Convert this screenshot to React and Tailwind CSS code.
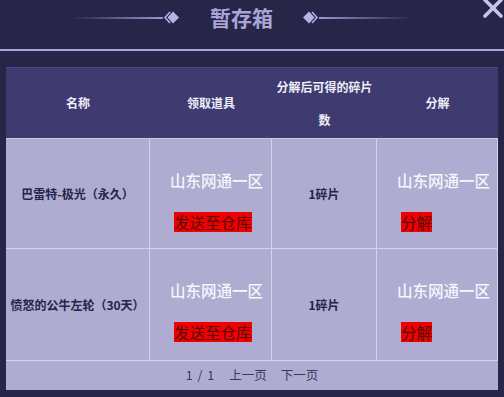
import React from "react";

const font = { fontFamily: '"Noto Sans CJK SC", "Noto Sans", sans-serif' };

function Diamond({ flip }) {
  return (
    <svg width="16" height="17" viewBox="0 0 16 17" className={flip ? "-scale-x-100" : ""}>
      <polyline points="7,3 2,8.5 7,14" fill="none" stroke="#b3afe4" strokeWidth="1.6" />
      <polygon points="10,2.5 16,8.5 10,14.5 4.5,8.5" fill="#b7b3e8" />
    </svg>
  );
}

function ZoneCell({ action }) {
  return (
    <div className="flex flex-col items-start border-r border-[#d3d3ec] pl-[20px] pt-[31px]">
      <div className="text-[15.5px] font-medium leading-[20px] text-[#f6f6fc]">山东网通一区</div>
      <div className="mt-[22px] ml-[4px] bg-[#f00000] text-[15.5px] leading-[20px] text-[#540808]">
        {action}
      </div>
    </div>
  );
}

function Row({ name, h }) {
  return (
    <div className={`grid grid-cols-[144px_122px_105px_121px] border-b border-[#d3d3ec] ${h}`}>
      <div className="flex items-center justify-center border-r border-[#d3d3ec] text-[12px] font-bold text-[#24244a]">
        {name}
      </div>
      <ZoneCell action="发送至仓库" />
      <div className="flex items-center justify-center border-r border-[#d3d3ec] text-[12px] font-bold text-[#24244a]">
        1碎片
      </div>
      <ZoneCell action="分解" />
    </div>
  );
}

export default function App() {
  return (
    <div className="w-[504px] h-[397px] overflow-hidden bg-[#272548]" style={font}>
      <div className="relative h-[49px]">
        <div className="flex h-[35px] items-center pl-[72px]">
          <div className="h-[2px] w-[91px] bg-gradient-to-r from-transparent to-[#9a96cf]" />
          <Diamond />
          <div className="ml-[31px] mr-[30px] text-[21px] font-bold leading-none text-[#a9a5d8]">暂存箱</div>
          <Diamond flip />
          <div className="h-[2px] w-[94px] bg-gradient-to-l from-transparent to-[#9a96cf]" />
        </div>
        <svg className="absolute right-[1px] top-[0px]" width="20" height="18" viewBox="0 0 20 18">
          <path d="M2 0 L18 16 M18 0 L2 16" stroke="#c6c2ee" strokeWidth="3.6" strokeLinecap="round" />
        </svg>
      </div>
      <div className="h-[2px] bg-[#aaa6d8]" />
      <div className="ml-[6px] mt-[16px] w-[492px]">
        <div className="grid h-[71px] grid-cols-[144px_122px_105px_121px] border-t border-[#4f4990] bg-[#3f3a70] text-[12px] font-bold text-[#eeeef8]">
          <div className="flex items-center justify-center">名称</div>
          <div className="flex items-center justify-center">领取道具</div>
          <div className="flex flex-col items-center justify-center leading-[33px]">
            <span>分解后可得的碎片</span>
            <span>数</span>
          </div>
          <div className="flex items-center justify-center">分解</div>
        </div>
        <div className="border-t border-[#c9c9e4] bg-[#aeadd1]">
          <Row name="巴雷特-极光（永久）" h="h-[110px]" />
          <Row name="愤怒的公牛左轮（30天）" h="h-[112px]" />
          <div className="flex h-[29px] items-center justify-center gap-[14px] text-[12.5px] text-[#3a3a58]">
            <span className="whitespace-pre tracking-[1px]">1 / 1</span>
            <span>上一页</span>
            <span>下一页</span>
          </div>
        </div>
      </div>
    </div>
  );
}
